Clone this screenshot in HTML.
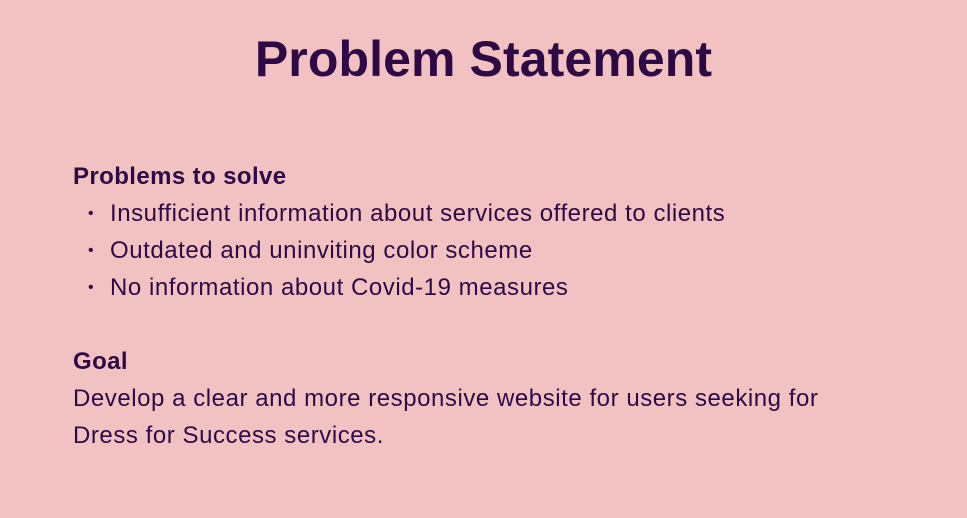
<!DOCTYPE html>
<html><head><style>
body{margin:0;width:967px;height:518px;background:#f2c2c2;font-family:"Liberation Sans",Arial,sans-serif;color:#2d0a45;position:relative;overflow:hidden}
h1{position:absolute;top:28px;left:0;width:967px;text-align:center;margin:0;font-size:50px;font-weight:bold;line-height:62px;letter-spacing:0.1px}
.t{position:absolute;left:73px;font-size:24px;line-height:37px;white-space:nowrap;letter-spacing:0.55px}
.b{font-weight:bold;letter-spacing:0.4px}
.li{position:absolute;left:110px;font-size:24px;line-height:37px;white-space:nowrap;letter-spacing:0.55px}
.li:before{content:"•";position:absolute;left:-22px;font-size:16px}
</style></head><body>
<h1>Problem Statement</h1>
<div class="t b" style="top:158px">Problems to solve</div>
<div class="li" style="top:195px">Insufficient information about services offered to clients</div>
<div class="li" style="top:232px">Outdated and uninviting color scheme</div>
<div class="li" style="top:269px">No information about Covid-19 measures</div>
<div class="t b" style="top:343px">Goal</div>
<div class="t" style="top:380px">Develop a clear and more responsive website for users seeking for</div>
<div class="t" style="top:417px">Dress for Success services.</div>
</body></html>
